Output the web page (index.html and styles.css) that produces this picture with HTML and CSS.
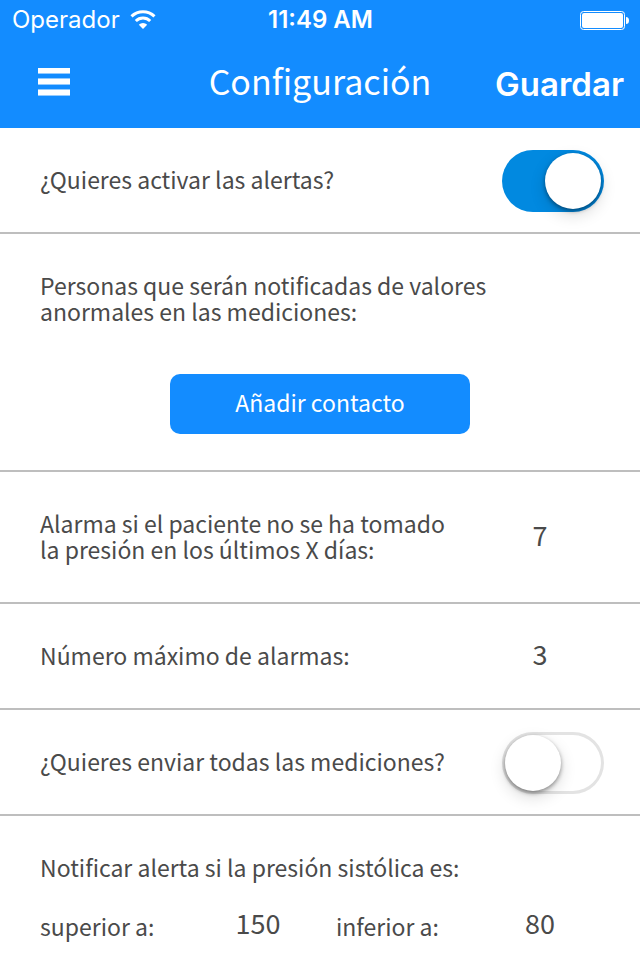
FILE: index.html
```html
<!DOCTYPE html>
<html lang="es">
<head>
    <meta charset="UTF-8">
    <meta name="viewport" content="width=device-width, initial-scale=1.0">
    <title>Configuración</title>
    <link rel="stylesheet" href="styles.css">
</head>
<body>

<header>
    <div class="status-bar">
        <div class="carrier">
            <span>Operador</span>
            <svg class="wifi" width="26" height="20" viewBox="0 0 26 20" aria-hidden="true">
                <path d="M1.5 6.3a16.5 16.5 0 0 1 23 0" fill="none" stroke="#fff" stroke-width="3"/>
                <path d="M5.8 11a10.3 10.3 0 0 1 14.4 0" fill="none" stroke="#fff" stroke-width="3"/>
                <path d="M13 19l-4.2-4.2a6 6 0 0 1 8.4 0z" fill="#fff"/>
            </svg>
        </div>
        <div class="clock">11:49 AM</div>
        <svg class="battery" width="49" height="19" viewBox="0 0 49 19" aria-hidden="true">
            <rect x="0.5" y="0.5" width="44" height="18" rx="3" fill="none" stroke="#fff"/>
            <rect x="2" y="2" width="41" height="15" rx="2" fill="#fff"/>
            <path d="M46 6a3 3.5 0 0 1 0 7z" fill="#fff"/>
        </svg>
    </div>
    <nav class="nav-bar">
        <button type="button" class="menu" aria-label="Menú">
            <svg width="32" height="28" viewBox="0 0 32 28" aria-hidden="true">
                <path d="M0 0h32v6H0zM0 10h32v7H0zM0 21h32v7H0z" fill="#fff" fill-opacity="0.55"/>
                <path d="M0 0h32v5H0zM0 11h32v5H0zM0 22h32v5H0z" fill="#fff"/>
            </svg>
        </button>
        <h1>Configuración</h1>
        <button type="submit" form="settings" class="save">Guardar</button>
    </nav>
</header>

<form id="settings">
    <div class="row">
        <label for="alerts">¿Quieres activar las alertas?</label>
        <input type="checkbox" class="switch" id="alerts" checked>
    </div>

    <div class="contacts">
        <p>Personas que serán notificadas de valores anormales en las mediciones:</p>
        <button type="button" class="btn">Añadir contacto</button>
    </div>

    <div class="row row-tall">
        <label for="days">Alarma si el paciente no se ha tomado la presión en los últimos X días:</label>
        <input type="text" inputmode="numeric" class="value" id="days" value="7">
    </div>

    <div class="row">
        <label for="maxAlarms">Número máximo de alarmas:</label>
        <input type="text" inputmode="numeric" class="value" id="maxAlarms" value="3">
    </div>

    <div class="row">
        <label for="sendAll">¿Quieres enviar todas las mediciones?</label>
        <input type="checkbox" class="switch" id="sendAll">
    </div>

    <fieldset class="limits">
        <legend>Notificar alerta si la presión sistólica es:</legend>
        <div class="limits-grid">
            <label for="above">superior a:</label>
            <input type="text" inputmode="numeric" class="value" id="above" value="150">
            <label for="below">inferior a:</label>
            <input type="text" inputmode="numeric" class="value" id="below" value="80">
        </div>
    </fieldset>
</form>

</body>
</html>
```
FILE: styles.css
```css
* {
    box-sizing: border-box;
}

body {
    margin: 0;
    font-family: "Noto Sans CJK SC", "Open Sans", sans-serif;
    font-size: 23px;
    line-height: 26px;
    color: #4a4a4a;
    background-color: #fff;
}

button,
input {
    margin: 0;
    padding: 0;
    border: 0;
    background: none;
    font: inherit;
    color: inherit;
}

button {
    cursor: pointer;
}

svg {
    display: block;
}

header {
    background-color: #138cff;
    color: #fff;
}

/* Status bar */
.status-bar {
    display: grid;
    grid-template-columns: 1fr auto 1fr;
    align-items: center;
    height: 40px;
    padding: 0 11px 0 12px;
    font-family: Inter, sans-serif;
    font-size: 24px;
}

.carrier {
    display: flex;
    align-items: center;
    gap: 10px;
}

.clock {
    font-weight: 600;
}

.battery {
    justify-self: end;
}

/* Navigation bar */
.nav-bar {
    display: grid;
    grid-template-columns: 1fr auto 1fr;
    align-items: center;
    height: 88px;
    padding: 0 16px;
}

.menu {
    justify-self: start;
    padding: 0 22px 4px;
}

h1 {
    margin: 0;
    padding-bottom: 6px;
    font-size: 34px;
    font-weight: 400;
    line-height: 44px;
}

.save {
    justify-self: end;
    font-family: Inter, sans-serif;
    font-size: 33px;
    font-weight: 600;
    line-height: 44px;
}

/* Settings rows */
.row {
    display: flex;
    align-items: center;
    justify-content: space-between;
    gap: 16px;
    min-height: 106px;
    padding: 2px 36px 0 40px;
    border-bottom: 2px solid #bebebe;
}

.row label {
    padding-bottom: 4px;
}

.row-tall {
    min-height: 132px;
}

.contacts {
    display: flex;
    flex-direction: column;
    gap: 50px;
    padding: 38px 120px 36px 40px;
    border-bottom: 2px solid #bebebe;
}

.contacts p {
    margin: 0;
}

.btn {
    align-self: flex-end;
    width: 300px;
    height: 60px;
    margin-right: 50px;
    padding-bottom: 4px;
    border-radius: 10px;
    background-color: #138cff;
    color: #fff;
}

.value {
    flex: none;
    width: 128px;
    height: 40px;
    padding-bottom: 8px;
    font-size: 27px;
    text-align: center;
}

/* Switch */
.switch {
    flex: none;
    appearance: none;
    display: flex;
    width: 102px;
    height: 62px;
    padding: 3px;
    border-radius: 31px;
    box-shadow: inset 0 0 0 3px #e3e3e3;
    cursor: pointer;
}

.switch::before {
    content: "";
    width: 56px;
    height: 56px;
    border-radius: 50%;
    background-color: #fff;
    box-shadow: 0 2px 4px rgba(0, 0, 0, 0.4), 0 6px 16px rgba(0, 0, 0, 0.15);
}

.switch:checked {
    justify-content: flex-end;
    background-color: #0189e0;
    box-shadow: none;
}

/* Pressure limits */
.limits {
    margin: 0;
    padding: 38px 36px 12px 40px;
    border: 0;
}

.limits legend {
    float: left;
    width: 100%;
    padding: 0;
}

.limits-grid {
    clear: both;
    display: grid;
    grid-template-columns: 1fr 156px 1fr 128px;
    align-items: center;
    padding-top: 26px;
}

.limits-grid .value {
    width: 100%;
}
```
